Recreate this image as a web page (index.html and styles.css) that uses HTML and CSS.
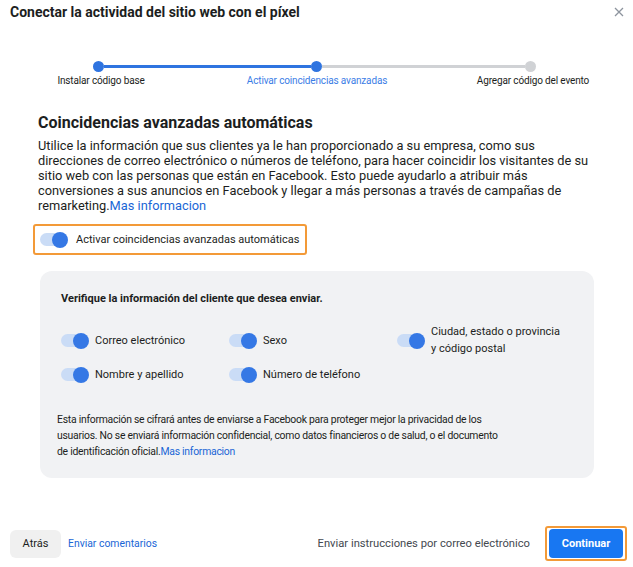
FILE: index.html
```html
<!DOCTYPE html>
<html lang="es">
<head>
<meta charset="utf-8">
<title>Conectar la actividad del sitio web con el píxel</title>
<link rel="stylesheet" href="styles.css">
</head>
<body>
<div class="dialog">
  <header class="header">
    <h1 class="title">Conectar la actividad del sitio web con el píxel</h1>
    <button class="close" aria-label="Cerrar">
      <svg width="10" height="10" viewBox="0 0 10 10"><path d="M1 1L9 9M9 1L1 9" stroke="#8d949e" stroke-width="1.3" fill="none"/></svg>
    </button>
  </header>

  <div class="stepper">
    <div class="track">
      <span class="dot done"></span><span class="line done l1"></span><span class="dot done"></span><span class="line l2"></span><span class="dot"></span>
    </div>
    <div class="labels">
      <span class="step">Instalar código base</span>
      <span class="step active">Activar coincidencias avanzadas</span>
      <span class="step">Agregar código del evento</span>
    </div>
  </div>

  <main class="content">
    <h2 class="heading">Coincidencias avanzadas automáticas</h2>
    <p class="intro">Utilice la información que sus clientes ya le han proporcionado a su empresa, como sus direcciones de correo electrónico o números de teléfono, para hacer coincidir los visitantes de su sitio web con las personas que están en Facebook. Esto puede ayudarlo a atribuir más conversiones a sus anuncios en Facebook y llegar a más personas a través de campañas de remarketing.<a class="link" href="#">Mas informacion</a></p>

    <div class="main-toggle">
      <span class="toggle"></span>
      <span class="main-toggle-label">Activar coincidencias avanzadas automáticas</span>
    </div>

    <section class="panel">
      <h3 class="panel-title">Verifique la información del cliente que desea enviar.</h3>
      <div class="fields">
        <div class="field"><span class="toggle"></span><span class="field-label">Correo electrónico</span></div>
        <div class="field"><span class="toggle"></span><span class="field-label">Sexo</span></div>
        <div class="field tall"><span class="toggle"></span><span class="field-label">Ciudad, estado o provincia<br>y código postal</span></div>
        <div class="field"><span class="toggle"></span><span class="field-label">Nombre y apellido</span></div>
        <div class="field"><span class="toggle"></span><span class="field-label">Número de teléfono</span></div>
      </div>
      <p class="note">Esta información se cifrará antes de enviarse a Facebook para proteger mejor la privacidad de los usuarios. No se enviará información confidencial, como datos financieros o de salud, o el documento de identificación oficial.<a class="link" href="#">Mas informacion</a></p>
    </section>
  </main>

  <footer class="footer">
    <button class="btn-back">Atrás</button>
    <a class="feedback" href="#">Enviar comentarios</a>
    <span class="spacer"></span>
    <span class="email">Enviar instrucciones por correo electrónico</span>
    <span class="continue-wrap"><button class="btn-continue">Continuar</button></span>
  </footer>
</div>
</body>
</html>
```
FILE: styles.css
```css
* { box-sizing: border-box; }
html, body { margin: 0; padding: 0; background: #fff; }
body {
  font-family: Roboto, "Liberation Sans", Arial, sans-serif;
  color: #1c1e21;
  width: 633px;
  height: 567px;
  overflow: hidden;
}
.dialog { display: flex; flex-direction: column; height: 567px; }

.header {
  display: flex;
  align-items: center;
  justify-content: space-between;
  padding: 4px 8px 0 10px;
  height: 21px;
}
.title { margin: 0; font-size: 14px; font-weight: 700; line-height: 17px; color: #1c1e21; }
.close { border: 0; background: none; padding: 0; width: 12px; height: 12px; display: flex; align-items: center; justify-content: center; margin-top: -2px; }

.stepper { margin-top: 40px; }
.track { display: flex; align-items: center; padding-left: 93px; height: 10px; }
.dot { width: 11px; height: 11px; border-radius: 50%; background: #d0d2d5; flex: none; }
.dot.done { background: #2f74e0; }
.line { height: 3px; background: #d0d2d5; flex: none; }
.line.done { background: #2f74e0; }
.l1 { width: 207px; }
.l2 { width: 203px; }
.labels {
  display: grid;
  grid-template-columns: 160px 160px 160px;
  column-gap: 56px;
  padding-left: 21px;
  margin-top: 4px;
}
.step { text-align: center; font-size: 10px; letter-spacing: -0.15px; line-height: 12px; color: #1c1e21; }
.step.active { color: #3b7de6; }

.content { padding: 0 0 0 38px; }
.heading { margin: 26px 0 0; font-size: 16px; font-weight: 700; line-height: 20px; color: #1c1e21; }
.intro { margin: 5px 0 0; width: 560px; font-size: 12.8px; line-height: 15px; color: #1c1e21; }
.link { color: #1a66d6; text-decoration: none; }

.main-toggle {
  display: inline-flex;
  align-items: center;
  gap: 8px;
  margin: 11px 0 0 -5px;
  height: 31px;
  padding: 0 6px 0 5px;
  border: 2px solid #f39a38;
  border-radius: 3px;
}
.main-toggle-label { font-size: 11px; color: #1c1e21; }

.toggle {
  position: relative;
  display: inline-block;
  flex: none;
  width: 28px;
  height: 15px;
}
.toggle::before {
  content: "";
  display: block;
  width: 26px;
  height: 13px;
  margin-top: 1px;
  border-radius: 7px;
  background: #cadcf6;
}
.toggle::after {
  content: "";
  position: absolute;
  right: 0;
  top: -0.5px;
  width: 16px;
  height: 16px;
  border-radius: 50%;
  background: #3578e5;
}

.panel {
  margin: 16px 0 0 2px;
  width: 554px;
  background: #f1f2f4;
  border-radius: 12px;
  padding: 21px 20px 18px 21px;
}
.panel-title { margin: 0; font-size: 11px; font-weight: 700; line-height: 14px; color: #1c1e21; }
.fields {
  display: grid;
  grid-template-columns: 168px 168px 1fr;
  row-gap: 17px;
  margin-top: 26px;
}
.field { display: flex; align-items: center; gap: 6px; height: 17px; }
.field.tall { align-items: flex-start; height: 17px; margin-top: -9px; }
.field.tall .toggle { margin-top: 10px; }
.field-label { font-size: 11px; line-height: 17px; color: #1c1e21; }
.note { margin: 29px 0 0 -4px; font-size: 10.4px; letter-spacing: -0.25px; line-height: 16px; color: #1c1e21; width: 446px; }

.footer {
  margin-top: auto;
  display: flex;
  align-items: center;
  padding: 0 6px 2px 10px;
  height: 45px;
}
.btn-back {
  border: 0;
  background: #f0f0f0;
  border-radius: 6px;
  width: 51px;
  height: 28px;
  font-family: inherit;
  font-size: 11px;
  color: #1c1e21;
  padding: 0;
}
.feedback { margin-left: 7px; font-size: 10.4px; color: #1a66d6; text-decoration: none; }
.spacer { flex: 1; }
.email { font-size: 11.2px; color: #444950; margin-right: 15px; }
.continue-wrap {
  display: inline-flex;
  border: 2px solid #f39a38;
  border-radius: 3px;
  padding: 1px 2px 1px 2px;
}
.btn-continue {
  border: 0;
  background: #1877f2;
  color: #fff;
  border-radius: 4px;
  width: 74px;
  height: 29px;
  font-family: inherit;
  font-size: 11px;
  font-weight: 700;
  padding: 0;
}
```
